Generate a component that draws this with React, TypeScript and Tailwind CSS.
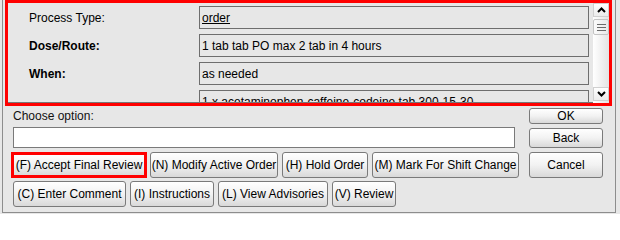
import React from "react";

function Btn({ className, children }: { className: string; children: React.ReactNode }) {
  return (
    <div
      className={
        "flex items-center justify-center whitespace-nowrap rounded-[3px] border border-[#7a7a7a] bg-linear-to-b from-[#ffffff] via-[#f2f2f2] to-[#d9d9d9] text-black " +
        className
      }
    >
      {children}
    </div>
  );
}

function Row({ label, bold, children }: { label: string; bold?: boolean; children: React.ReactNode }) {
  return (
    <div className="flex h-[23px] shrink-0 items-center">
      <div className={"w-[191px] shrink-0 pl-[21px] " + (bold ? "font-bold" : "")}>{label}</div>
      <div className="flex h-[23px] flex-1 items-center overflow-hidden whitespace-nowrap border border-[#6e6e6e] pl-[2px]">
        {children}
      </div>
    </div>
  );
}

export default function App() {
  return (
    <div
      className="h-[214px] w-[620px] overflow-hidden bg-[#e7e7e7] pl-[2px] text-[12px] leading-[14px] text-black"
      style={{ fontFamily: '"Liberation Sans", Arial, sans-serif' }}
    >
      <div className="flex h-[213px] w-[614px] flex-col border-b border-l border-r border-[#8d8d8d]">
        {/* red highlighted panel */}
        <div className="ml-[2px] flex h-[106px] w-[607px] shrink-0 border-[3px] border-[#ff0000]">
          <div className="flex h-full flex-1 flex-col gap-[5px] overflow-hidden border-b border-[#777777] pr-[4px] pt-[3px]">
            <Row label="Process Type:">
              <span className="underline">order</span>
            </Row>
            <Row label="Dose/Route:" bold>
              1 tab tab PO max 2 tab in 4 hours
            </Row>
            <Row label="When:" bold>
              as needed
            </Row>
            <Row label="">1 x acetaminophen-caffeine-codeine tab 300-15-30</Row>
          </div>
          {/* scrollbar */}
          <div className="flex h-full w-[16px] shrink-0 flex-col bg-linear-to-r from-[#ffffff] to-[#e4e4e4]">
            <div className="flex h-[14px] items-center justify-center border border-[#d0d0d0] bg-linear-to-b from-[#ffffff] to-[#ececec]">
              <svg width="9" height="6" viewBox="0 0 9 6">
                <path d="M1 5 L4.5 1.5 L8 5" stroke="#000" strokeWidth="2" fill="none" />
              </svg>
            </div>
            <div className="mt-[2px] flex h-[16px] flex-col items-center justify-center gap-[2px] rounded-[2px] border border-[#c4c4c4] bg-linear-to-r from-[#fbfbfb] to-[#e8e8e8]">
              <div className="h-[1px] w-[9px] bg-[#6a6a6a]" />
              <div className="h-[1px] w-[9px] bg-[#6a6a6a]" />
              <div className="h-[1px] w-[9px] bg-[#6a6a6a]" />
            </div>
            <div className="flex-1" />
            <div className="mb-[2px] flex h-[14px] items-center justify-center border border-[#d0d0d0] bg-linear-to-b from-[#ffffff] to-[#ececec]">
              <svg width="9" height="6" viewBox="0 0 9 6">
                <path d="M1 1 L4.5 4.5 L8 1" stroke="#000" strokeWidth="2" fill="none" />
              </svg>
            </div>
          </div>
        </div>

        {/* lower area */}
        <div className="flex pl-[10px]">
          <div className="flex w-[516px] flex-col">
            <div className="mt-[3px] h-[14px] text-[#111]">Choose option:</div>
            <div className="mt-[4px] h-[21px] w-[502px] border border-[#7a7a7a] bg-white" />
            <div className="mt-[4px] flex h-[26px]">
              <div className="-ml-[2px] flex w-[136px] border-[3px] border-[#ff0000]">
                <div className="flex flex-1 items-center justify-center whitespace-nowrap bg-linear-to-b from-[#ffffff] via-[#f2f2f2] to-[#d9d9d9]">
                  (F) Accept Final Review
                </div>
              </div>
              <Btn className="ml-[3px] w-[128px]">(N) Modify Active Order</Btn>
              <Btn className="ml-[4px] w-[86px]">(H) Hold Order</Btn>
              <Btn className="ml-[4px] w-[147px]">(M) Mark For Shift Change</Btn>
            </div>
            <div className="mt-[3px] flex h-[26px]">
              <Btn className="w-[113px]">(C) Enter Comment</Btn>
              <Btn className="ml-[4px] w-[84px]">(I) Instructions</Btn>
              <Btn className="ml-[4px] w-[110px]">(L) View Advisories</Btn>
              <Btn className="ml-[4px] w-[64px]">(V) Review</Btn>
            </div>
          </div>
          <div className="flex w-[74px] flex-col">
            <Btn className="mt-[2px] h-[16px]">OK</Btn>
            <Btn className="mt-[4px] h-[20px]">Back</Btn>
            <Btn className="mt-[4px] h-[26px]">Cancel</Btn>
          </div>
        </div>
      </div>
    </div>
  );
}
